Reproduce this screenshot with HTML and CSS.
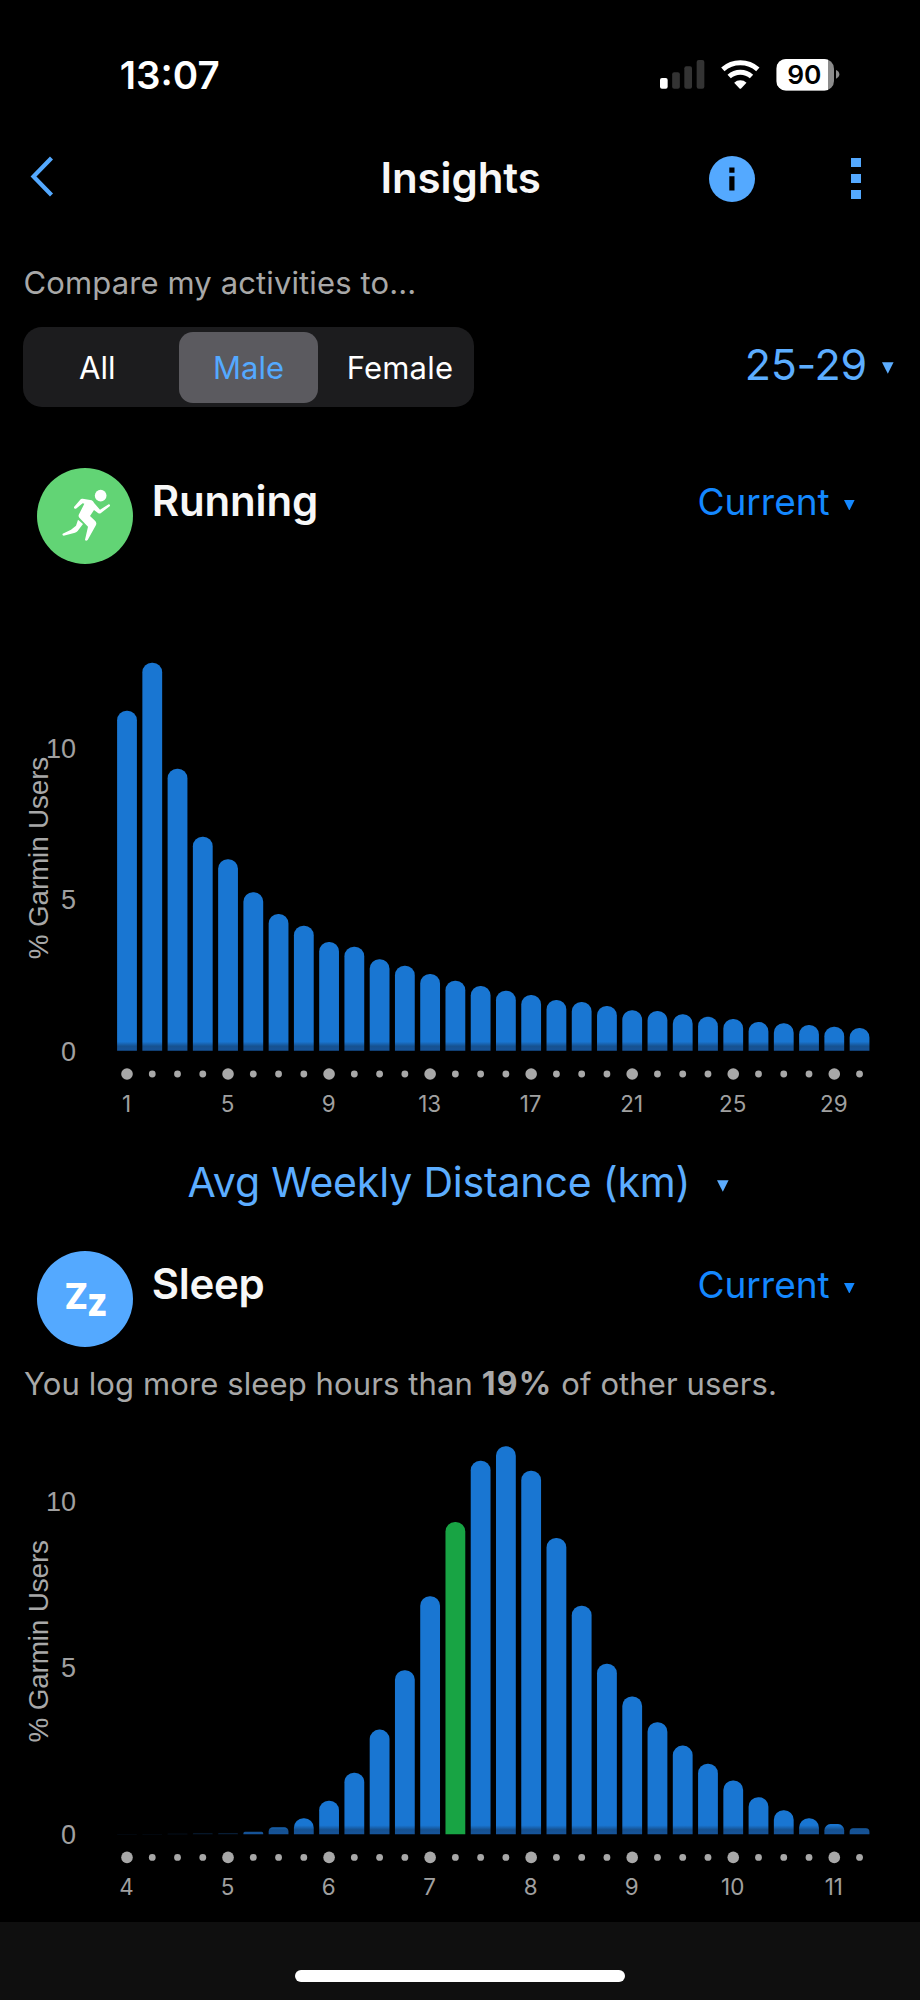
FILE: index.html
```
<!DOCTYPE html>
<html lang="en">
<head>
<meta charset="utf-8">
<title>Insights</title>
<link rel="stylesheet" href="styles.css">
</head>
<body>
<div class="screen">
  <header class="status">
    <span class="clock">13:07</span>
    <svg class="status-icons" viewBox="0 0 600 150">
      <g fill="#333">
        <rect x="30" y="84" width="23" height="32" rx="6" fill="#fff"/>
        <rect x="66.500" y="67" width="23" height="49" rx="6"/>
        <rect x="103" y="49" width="23" height="67" rx="6"/>
        <rect x="140" y="30" width="23" height="86" rx="6"/>
      </g>
      <g fill="none" stroke="#fff" stroke-width="15">
        <path d="M218.500 58A79.500 79.500 0 0 1 323.500 58"/>
        <path d="M237.500 79.500A50.500 50.500 0 0 1 304.500 79.500"/>
      </g>
      <path d="M252.500 98A27 27 0 0 1 289.500 98L274 114.500Q271 117.500 268 114.500Z" fill="#fff"/>
      <clipPath id="battery"><rect x="379" y="27" width="173" height="95" rx="29"/></clipPath>
      <g clip-path="url(#battery)">
        <rect x="379" y="27" width="173" height="95" fill="#8c8c8c"/>
        <rect x="379" y="27" width="155" height="95" fill="#fff"/>
      </g>
      <path d="M558 60Q568 64 568 73T558 86Z" fill="#8c8c8c"/>
      <text class="battery-text" x="463" y="103">90</text>
    </svg>
  </header>

  <nav class="nav">
    <svg class="back" viewBox="0 0 24 42"><path d="M21.500 2L3.500 20.500L21.500 39" fill="none" stroke="#54a9ff" stroke-width="4.200"/></svg>
    <h1 class="title">Insights</h1>
    <svg class="info" viewBox="0 0 46 46"><circle cx="23" cy="23" r="23" fill="#54a9ff"/><path d="M20.300 11.500h5.200v5.200h-5.200zM20.300 20.300h5.200v14.200h-5.200z" fill="#000"/></svg>
    <span class="more"><i></i><i></i><i></i></span>
  </nav>

  <p class="note compare">Compare my activities to...</p>
  <div class="filters">
    <div class="segments">
      <span class="segment">All</span>
      <span class="segment selected">Male</span>
      <span class="segment female">Female</span>
    </div>
    <span class="age">25-29<svg class="caret" viewBox="0 0 12 12"><path d="M0 0H12L6 12Z"/></svg></span>
  </div>

  <section class="head">
    <svg class="badge" viewBox="20 24 288 288">
      <circle cx="164" cy="168" r="144" fill="#62d475"/>
      <g fill="#fff">
        <circle cx="211" cy="107" r="17.500"/>
        <path d="M131 141L151 117.500Q153 115.500 157 116.500L184 121Q188 122 192 130L209 149L235 133Q240 133 239 138L211 160Q207 162 203 159L191 150L179 168L194 182Q200 188 197 195L172 240Q166 245 164 239L173 200L147 173Q143 168 146 163L162 131L157 130L137 146Q130 147 131 141Z"/>
        <path d="M143 179L158 192L142 213Q139 217 134 218L100 227Q94 226 97 221L122 209L137 197Z"/>
      </g>
    </svg>
    <h2 class="name">Running</h2>
    <span class="period">Current<svg class="caret" viewBox="0 0 12 12"><path d="M0 0H12L6 12Z"/></svg></span>
  </section>
  <svg class="chart" id="running" width="920" height="566" viewBox="0 564 920 566"></svg>
  <div class="metric">Avg Weekly Distance (km)<svg class="caret" viewBox="0 0 12 12"><path d="M0 0H12L6 12Z"/></svg></div>

  <section class="head">
    <svg class="badge" viewBox="37 1251 96 96">
      <circle cx="85" cy="1299" r="48" fill="#54a9ff"/>
      <text class="zz" x="64.500" y="1309.300" font-size="35" textLength="23.500" lengthAdjust="spacingAndGlyphs">Z</text>
      <text class="zz" x="87" y="1315.700" font-size="40" textLength="20.500" lengthAdjust="spacingAndGlyphs">z</text>
    </svg>
    <h2 class="name sleep">Sleep</h2>
    <span class="period">Current<svg class="caret" viewBox="0 0 12 12"><path d="M0 0H12L6 12Z"/></svg></span>
  </section>
  <p class="note summary">You log more sleep hours than <b class="percent">19%</b> of other users.</p>
  <svg class="chart" id="sleep" width="920" height="518" viewBox="0 1404 920 518"></svg>

  <footer class="footer"><span class="home"></span></footer>
</div>
<script src="charts.js"></script>
</body>
</html>
```
FILE: styles.css
```
* { box-sizing: border-box; margin: 0; padding: 0; }
body { background: #000; font-family: Inter, "Liberation Sans", sans-serif; }
svg { display: block; flex: none; }
.screen { width: 920px; height: 2000px; overflow: hidden; display: flex; flex-direction: column; background: #000; white-space: nowrap; }
.status { height: 120px; padding: 30px 70px 0 119.7px; display: flex; align-items: center; justify-content: space-between; }
.clock { font-size: 38.5px; font-weight: 600; color: #fff; line-height: 90px; }
.status-icons { width: 200px; height: 50px; }
.battery-text { font: 600 79px Inter, sans-serif; text-anchor: middle; fill: #000; }
.nav { height: 116px; padding: 0 59px 0 30px; display: flex; align-items: center; }
.back { width: 24px; height: 42px; margin-top: -2.5px; }
.title { margin: -2px 0 0 326.5px; width: 328.5px; font-size: 42px; font-weight: 600; letter-spacing: -.1px; color: #f7f7f7; }
.info { width: 46px; height: 46px; margin-top: 1px; }
.more { margin-left: auto; margin-top: 1px; display: flex; flex-direction: column; gap: 6.8px; }
.more i { width: 10px; height: 9.2px; background: #54a9ff; }
.note { font-size: 31px; color: #a8a8a8; padding-left: 23.5px; }
.compare { height: 40px; line-height: 40px; margin-top: 27.2px; letter-spacing: .12px; }
.filters { height: 80px; margin-top: 24.3px; padding: 0 26.5px 0 23.3px; display: flex; justify-content: space-between; align-items: flex-start; }
.segments { width: 450.4px; height: 79.4px; padding: 4.5px; border-radius: 19px; background: #1c1c1e; display: flex; }
.segment { width: 151px; height: 70.8px; line-height: 71.4px; text-align: center; font-size: 31px; color: #fff; }
.segment.selected { width: 139.5px; border-radius: 14px; background: #5b5a5f; color: #54a9ff; }
.female { letter-spacing: .2px; padding-left: 12.5px; }
.segment:first-child { padding-right: 12px; }
.age { line-height: 75.4px; font-size: 43px; letter-spacing: -.3px; color: #5cadff; display: flex; align-items: center; }
.caret { width: 11.6px; height: 12px; fill: currentColor; }
.age .caret { margin: 6px 0 0 15px; }
.head { height: 96px; flex: none; padding: 0 65.500px 0 37px; display: flex; align-items: flex-start; }
.filters + .head { margin-top: 60.2px; }
.badge { width: 96px; height: 96px; }
.name { margin-left: 18.7px; font-size: 42px; font-weight: 600; line-height: 66.6px; letter-spacing: -.15px; color: #f7f7f7; }
.name.sleep { letter-spacing: -.3px; }
.period { margin-left: auto; display: flex; align-items: center; font-size: 37px; line-height: 67.400px; color: #1488ff; }
.period .caret { width: 10.6px; height: 10.6px; margin: 7px 0 0 14.2px; }
.metric { height: 105px; flex: none; padding-left: 187.500px; display: flex; align-items: center; font-size: 41px; letter-spacing: -.17px; color: #5cadff; }
.metric .caret { margin: 8px 0 0 26.700px; }
.metric + .head { margin-top: 16px; }
.summary { height: 40px; line-height: 40px; margin-top: 17px; letter-spacing: .11px; padding-left: 24px; }
.percent { font-weight: 700; font-size: 32px; line-height: 0; letter-spacing: 1.2px; }
.chart { width: 920px; }
.footer { height: 78px; background: #0f0f0f; padding-top: 48.6px; flex: none; }
.home { display: block; width: 330px; height: 11.5px; margin: 0 auto; border-radius: 6px; background: #fff; }
.bar { fill: #1976d2; }
.bar.mine { fill: #18a444; }
.dot { fill: #a8a8a8; }
.tick { font: 22.400px Inter, sans-serif; fill: #a0a0a0; text-anchor: middle; }
.value { font: 27px "Liberation Sans", sans-serif; fill: #a0a0a0; text-anchor: end; }
.axis { font: 27.900px "Liberation Sans", sans-serif; fill: #a8a8a8; }
.zz { font-family: Inter, sans-serif; font-weight: 800; fill: #fff; }
```
FILE: charts.js
```
const PITCH = 25.26, FIRST = 127, WIDTH = 19.8;

// Draws columns with rounded tops, a row of dots and both axes.
function drawChart(id, c) {
  const shade = id + '-shade';
  let out = `<defs><linearGradient id="${shade}" gradientUnits="userSpaceOnUse" x1="0" x2="0" y1="${c.base - 9}" y2="${c.base}"><stop offset="0" stop-color="#1976d2"/><stop offset=".5" stop-color="#165190"/><stop offset="1" stop-color="#16549a"/></linearGradient></defs>`;
  c.heights.forEach((h, i) => {
    const x = FIRST + i * PITCH, l = x - WIDTH / 2, r = Math.min(9.5, h * .6), top = c.base - h;
    const mine = i === c.mine;
    const fill = mine ? '' : `style="fill:url(#${shade})"`;
    out += `<path class="bar${mine ? ' mine' : ''}" ${fill} opacity="${h < 2 ? .35 : 1}" d="M${l} ${c.base}V${top + r}A${r} ${r} 0 0 1 ${l + r} ${top}H${l + WIDTH - r}A${r} ${r} 0 0 1 ${l + WIDTH} ${top + r}V${c.base}Z"/>`;
    const major = i % 4 === 0;
    out += `<circle class="dot" cx="${x}" cy="${c.dots}" r="${major ? 5.8 : 3.4}"/>`;
    if (major) out += `<text class="tick" x="${x - .5}" y="${c.ticks}">${c.start + (i / 4) * c.step}</text>`;
  });
  c.values.forEach(([v, y]) => { out += `<text class="value" x="76" y="${y}">${v}</text>`; });
  out += `<text class="axis" transform="translate(47.6 ${c.title}) rotate(-90)" textLength="202.500">% Garmin Users</text>`;
  document.getElementById(id).innerHTML = out;
}

drawChart('running', {
  base: 1050.7, dots: 1074, ticks: 1111.7, title: 959.2, start: 1, step: 4, mine: -1,
  values: [[10, 757.5], [5, 909.3], [0, 1060.5]],
  heights: [340, 388, 282, 214, 191.4, 158.4, 136.7, 125, 108.7, 104, 91.4, 85, 76.7, 70, 64.7, 60, 55.7, 50.7, 48.7, 44.7, 40.4, 39.7, 36.4, 34, 31.7, 28.7, 27.4, 25.7, 24, 22.7]
});
drawChart('sleep', {
  base: 1834.3, dots: 1857.4, ticks: 1894.8, title: 1742.5, start: 4, step: 1, mine: 13,
  values: [[10, 1510.8], [5, 1677], [0, 1843.8]],
  heights: [.4, .4, .5, 1, 1.4, 2.5, 7, 16, 33.5, 61.6, 104.7, 164, 238, 312.4, 373.5, 388, 363.5, 296.3, 228.6, 170.5, 137.8, 112, 88.7, 70.5, 53.8, 37, 24, 16, 10.2, 6]
});
```
